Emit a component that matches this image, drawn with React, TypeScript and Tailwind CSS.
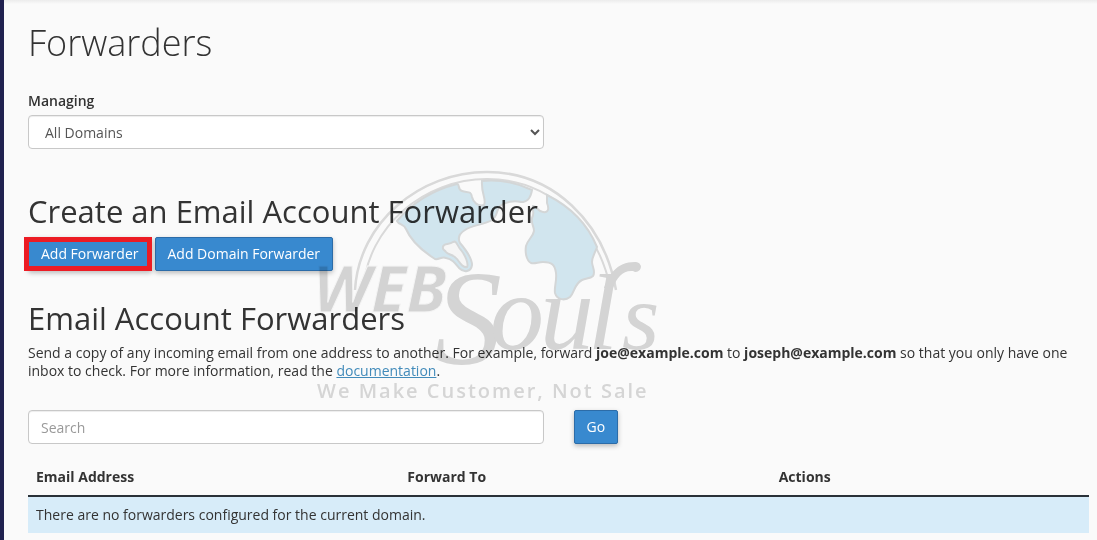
import type { ReactNode } from "react";

const buttonClass =
  "h-[34px] rounded-[2px] border border-[#2c6ca8] bg-[#3889cf] px-3 text-sm text-white shadow-[0_2px_5px_rgba(0,0,0,0.26)]";

const fieldClass =
  "h-[34px] w-full rounded border border-[#c8c8c8] bg-white px-3 text-sm text-[#555] shadow-[inset_0_1px_1px_rgba(0,0,0,0.075)]";

function PrimaryButton({ children }: { children: ReactNode }) {
  return (
    <button type="button" className={buttonClass}>
      {children}
    </button>
  );
}

function Watermark() {
  return (
    <svg
      aria-hidden="true"
      viewBox="310 165 355 245"
      className="pointer-events-none absolute left-[306px] top-[165px] h-[245px] w-[355px] overflow-visible mix-blend-multiply"
    >
      <g fill="none" stroke="#dedede" strokeWidth="2.5">
        <path d="M355 290C359 222 420 172 487 172C553 172 604 222 616 290" />
        <path d="M363 290C368 226 424 179 487 179C549 179 597 224 611 290" strokeWidth="2" />
      </g>
      <g fill="#d6eaf3" stroke="#d8dbdc" strokeWidth="2">
        <path d="M397 221C413 202 433 190 457 184C460 184 457 189 462 191C467 193 471 190 472 197C473 202 478 207 484 205C487 200 481 194 482 181C500 179 517 183 532 190C531 196 529 202 521 202C514 200 505 202 500 206C496 210 498 216 492 220C484 225 471 225 465 230C460 233 457 237 460 243C466 250 472 258 472 265C471 272 464 273 459 268C455 263 452 259 446 258C442 256 439 260 435 259C421 250 411 241 406 229C404 224 399 225 397 221Z" />
        <path
          d="M443 247C443 243 449 245 453 242C457 240 457 246 461 250C465 255 469 264 467 267C463 268 460 263 457 259C453 254 448 255 446 252C445 250 442 250 443 247Z"
          fill="#fafafa"
        />
        <path d="M547 195C571 207 588 225 597 247C595 253 592 257 592 262C592 267 596 271 593 276C590 279 586 278 582 280C574 284 575 292 570 297C565 301 557 300 555 293C554 287 557 281 556 273C555 265 552 262 543 262C538 262 535 264 531 263C526 260 525 252 526 246C528 239 533 237 534 231C534 226 531 224 532 218C535 213 532 210 533 206C537 206 538 212 543 212C549 213 549 208 547 203Z" />
      </g>
      <g fill="#d8d8d8" stroke="#fafafa" strokeWidth="1">
        <text x="313" y="312" fontFamily="'Open Sans', sans-serif" fontSize="65" fontWeight="700" fontStyle="italic">
          WEB
        </text>
      </g>
      <g fill="#d9d9d9" fontFamily="'Liberation Serif', serif" fontStyle="italic">
        <text y="364" fontSize="136">
          <tspan x="434">S</tspan>
          <tspan x="490" y="349" fontSize="108">
            o
          </tspan>
          <tspan x="540" fontSize="108">
            u
          </tspan>
          <tspan x="588" fontSize="108">
            l
          </tspan>
          <tspan x="622" fontSize="96">
            s
          </tspan>
        </text>
        <path d="M604 288C609 275 616 262 635 262A5 5 0 1 1 633 271C623 270 617 277 613 288Z" />
      </g>
      <text
        x="317"
        y="398"
        fill="#dadada"
        fontFamily="'Open Sans', sans-serif"
        fontSize="20"
        fontWeight="600"
        className="tracking-widest"
      >
        We Make Customer, Not Sale
      </text>
    </svg>
  );
}

export default function App() {
  return (
    <div className="relative min-h-screen border-l-4 border-[#20214f] bg-[#fafafa] font-['Open_Sans',sans-serif] text-sm text-[#333]">
      <div className="h-1 bg-linear-to-b from-[#ececec] to-[#fafafa]" />
      <main className="pr-2 pb-[7px] pl-6 pt-[19px]">
        <h1 className="text-4xl leading-10 font-light">Forwarders</h1>

        <div className="mt-7 grid grid-cols-2 gap-[30px]">
          <div>
            <label htmlFor="domain" className="mb-1 block leading-5 font-semibold">
              Managing
            </label>
            <select id="domain" className={fieldClass}>
              <option>All Domains</option>
            </select>
          </div>
        </div>

        <h2 className="mt-11 text-[31px] leading-9">Create an Email Account Forwarder</h2>
        <div className="mt-2 flex gap-[3px]">
          <div className="relative">
            <PrimaryButton>Add Forwarder</PrimaryButton>
            <div className="pointer-events-none absolute inset-y-0 -left-1 right-0 border-5 border-[#ec1c24]" />
          </div>
          <PrimaryButton>Add Domain Forwarder</PrimaryButton>
        </div>

        <h2 className="mt-[29px] text-[31px] leading-9">Email Account Forwarders</h2>
        <p className="mt-2 leading-[18px]">
          Send a copy of any incoming email from one address to another. For example, forward{" "}
          <b>joe@example.com</b> to <b>joseph@example.com</b> so that you only have one inbox to check. For more
          information, read the{" "}
          <a href="#documentation" className="text-[#428bba] underline">
            documentation
          </a>
          .
        </p>

        <form className="mt-[30px] grid grid-cols-2 gap-[30px]">
          <input type="search" aria-label="Search" placeholder="Search" className={`${fieldClass} placeholder:text-[#999]`} />
          <div>
            <PrimaryButton>Go</PrimaryButton>
          </div>
        </form>

        <table className="mt-[14px] w-full table-fixed text-left">
          <thead>
            <tr className="h-[38px] border-b-2 border-[#293138]">
              <th className="w-[35%] px-2 font-bold">Email Address</th>
              <th className="w-[35%] px-2 font-bold">Forward To</th>
              <th className="px-2 font-bold">Actions</th>
            </tr>
          </thead>
          <tbody>
            <tr className="h-[37px] bg-[#d7ecf9]">
              <td colSpan={3} className="px-2">
                There are no forwarders configured for the current domain.
              </td>
            </tr>
          </tbody>
        </table>
      </main>
      <Watermark />
    </div>
  );
}
